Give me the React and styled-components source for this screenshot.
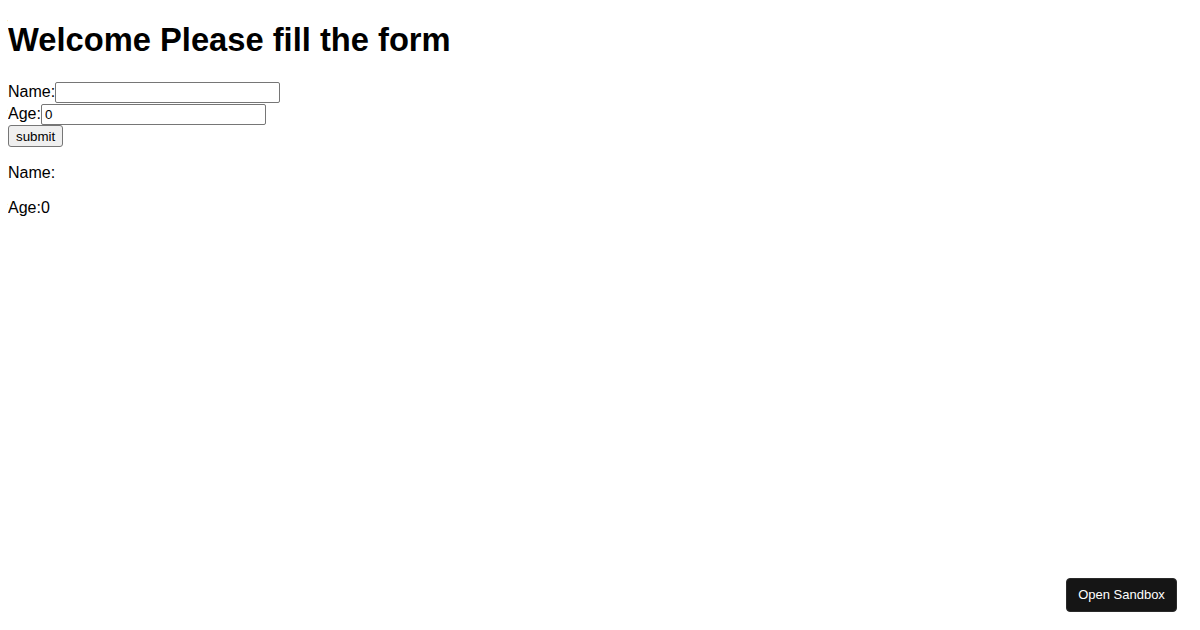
import React, { useState } from "react";
import styled, { createGlobalStyle } from "styled-components";

const GlobalStyle = createGlobalStyle`
  body {
    margin: 8px;
    font-family: "Liberation Sans", Arial, sans-serif;
    font-size: 16px;
    color: #000000;
    background: #ffffff;
  }
`;

const Title = styled.h1`
  font-size: 32.7px;
  font-weight: bold;
  margin: 13px 0 22px;
`;

const Form = styled.form`
  margin: 0;
`;

const Row = styled.div`
  display: flex;
  align-items: center;
  height: ${(props) => props.height || 22}px;
`;

const Label = styled.label`
  font-size: 16px;
`;

const Field = styled.input`
  box-sizing: border-box;
  width: 225px;
  height: 21px;
  padding: 1px 3px;
  margin: 0;
  border: 1px solid #767676;
  border-radius: 2px;
  font-family: "Liberation Sans", Arial, sans-serif;
  font-size: 13.33px;
  color: #000000;
  outline: none;
`;

const SubmitButton = styled.button`
  box-sizing: border-box;
  height: 22px;
  padding: 1px 7px;
  margin: 0;
  border: 1px solid #767676;
  border-radius: 3px;
  background: #efefef;
  font-family: "Liberation Sans", Arial, sans-serif;
  font-size: 13.33px;
  color: #000000;
  cursor: pointer;
`;

const Result = styled.p`
  margin: 16px 0;
  line-height: 19px;
`;

const SandboxButton = styled.a`
  position: fixed;
  right: 23px;
  bottom: 18px;
  display: flex;
  align-items: center;
  justify-content: center;
  box-sizing: border-box;
  width: 111px;
  height: 34px;
  padding-bottom: 1px;
  border-radius: 4px;
  background: #151515;
  color: #ffffff;
  font-family: "Liberation Sans", Arial, sans-serif;
  font-size: 13px;
  text-decoration: none;
  border: 1px solid #2a2a2a;
`;

export default function App() {
  const [name, setName] = useState("");
  const [age, setAge] = useState(0);
  const [submitted, setSubmitted] = useState({ name: "", age: 0 });

  const handleSubmit = (e) => {
    e.preventDefault();
    setSubmitted({ name, age });
  };

  return (
    <>
      <GlobalStyle />
      <Title>Welcome Please fill the form</Title>
      <Form onSubmit={handleSubmit}>
        <Row>
          <Label htmlFor="name">Name:</Label>
          <Field id="name" type="text" value={name} onChange={(e) => setName(e.target.value)} />
        </Row>
        <Row>
          <Label htmlFor="age">Age:</Label>
          <Field id="age" type="text" value={age} onChange={(e) => setAge(e.target.value)} />
        </Row>
        <Row>
          <SubmitButton type="submit">submit</SubmitButton>
        </Row>
      </Form>
      <Result>Name:{submitted.name}</Result>
      <Result>Age:{submitted.age}</Result>
      <SandboxButton href="#">Open Sandbox</SandboxButton>
    </>
  );
}
